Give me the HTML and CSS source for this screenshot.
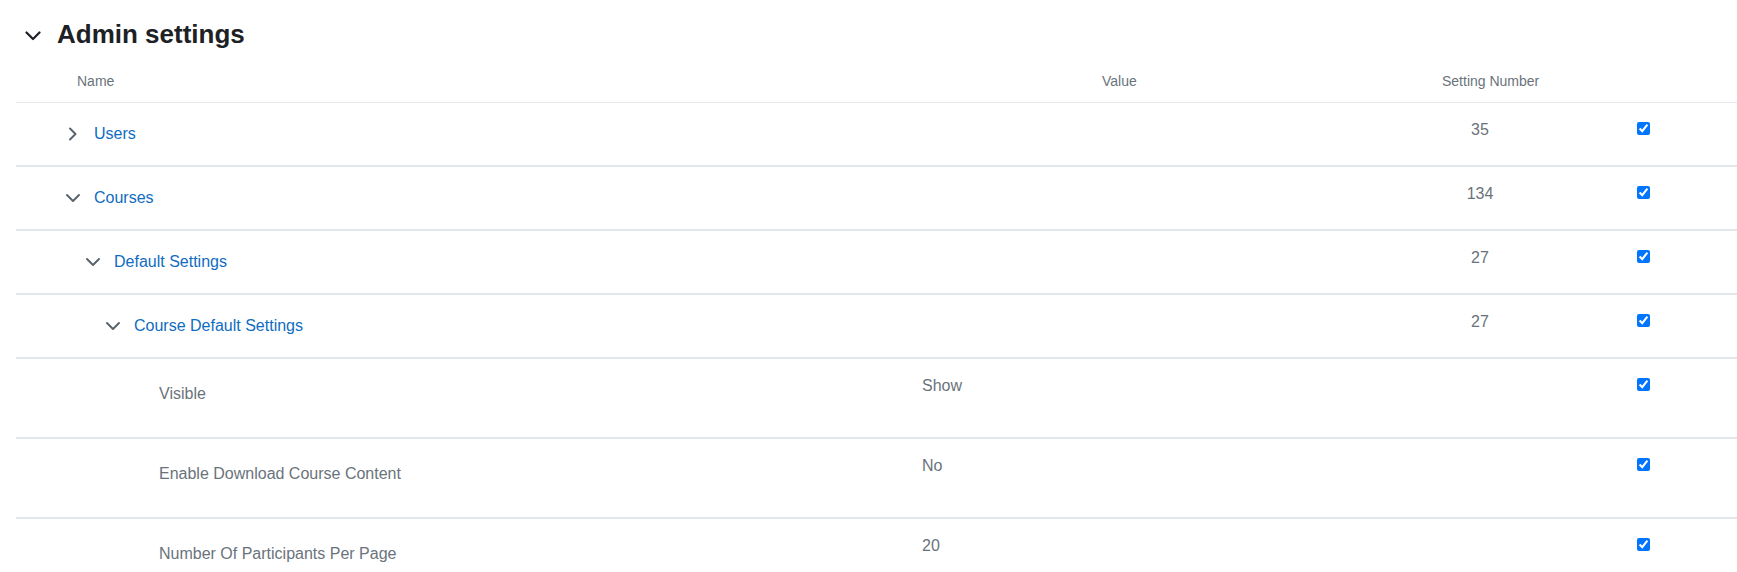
FILE: index.html
```html
<!DOCTYPE html>
<html lang="en">
<head>
<meta charset="utf-8">
<title>Admin settings</title>
<link rel="stylesheet" href="styles.css">
</head>
<body>
<div class="page">
  <h2 class="heading">
    <svg class="heading-chev" width="16" height="10" viewBox="0 0 16 10"><polyline points="1.5,1.5 8,8 14.5,1.5" fill="none" stroke="#1d2125" stroke-width="2.2" stroke-linecap="round" stroke-linejoin="round"/></svg>
    <span>Admin settings</span>
  </h2>
  <div class="table">
    <div class="row head">
      <div class="cell c-name">Name</div>
      <div class="cell c-value">Value</div>
      <div class="cell c-num">Setting Number</div>
      <div class="cell c-check"></div>
    </div>

    <div class="row cat">
      <div class="cell c-name lvl0">
        <svg class="chev" width="14" height="14" viewBox="0 0 14 14"><polyline points="4,1.5 9.5,7 4,12.5" /></svg>
        <a class="link" href="#">Users</a>
      </div>
      <div class="cell c-value"></div>
      <div class="cell c-num">35</div>
      <div class="cell c-check"><input type="checkbox" checked></div>
    </div>

    <div class="row cat">
      <div class="cell c-name lvl0">
        <svg class="chev" width="14" height="14" viewBox="0 0 14 14"><polyline points="1,4 7,10 13,4" /></svg>
        <a class="link" href="#">Courses</a>
      </div>
      <div class="cell c-value"></div>
      <div class="cell c-num">134</div>
      <div class="cell c-check"><input type="checkbox" checked></div>
    </div>

    <div class="row cat">
      <div class="cell c-name lvl1">
        <svg class="chev" width="14" height="14" viewBox="0 0 14 14"><polyline points="1,4 7,10 13,4" /></svg>
        <a class="link" href="#">Default Settings</a>
      </div>
      <div class="cell c-value"></div>
      <div class="cell c-num">27</div>
      <div class="cell c-check"><input type="checkbox" checked></div>
    </div>

    <div class="row cat">
      <div class="cell c-name lvl2">
        <svg class="chev" width="14" height="14" viewBox="0 0 14 14"><polyline points="1,4 7,10 13,4" /></svg>
        <a class="link" href="#">Course Default Settings</a>
      </div>
      <div class="cell c-value"></div>
      <div class="cell c-num">27</div>
      <div class="cell c-check"><input type="checkbox" checked></div>
    </div>

    <div class="row item">
      <div class="cell c-name">Visible</div>
      <div class="cell c-value">Show</div>
      <div class="cell c-num"></div>
      <div class="cell c-check"><input type="checkbox" checked></div>
    </div>

    <div class="row item">
      <div class="cell c-name">Enable Download Course Content</div>
      <div class="cell c-value">No</div>
      <div class="cell c-num"></div>
      <div class="cell c-check"><input type="checkbox" checked></div>
    </div>

    <div class="row item">
      <div class="cell c-name">Number Of Participants Per Page</div>
      <div class="cell c-value">20</div>
      <div class="cell c-num"></div>
      <div class="cell c-check"><input type="checkbox" checked></div>
    </div>
  </div>
</div>
</body>
</html>
```

FILE: styles.css
```css
* { box-sizing: border-box; }

html, body {
  margin: 0;
  padding: 0;
  background: #ffffff;
}

body {
  font-family: "Liberation Sans", Arial, sans-serif;
  color: #6a737b;
  overflow: hidden;
}

.page {
  width: 1737px;
}

.heading {
  margin: 0;
  padding: 19px 0 0 25px;
  height: 50px;
  display: flex;
  align-items: center;
  font-size: 26px;
  line-height: 31px;
  font-weight: 700;
  color: #1d2125;
}

.heading > span {
  display: block;
  line-height: 31px;
}

.heading-chev {
  margin-top: 3px;
  margin-right: 16px;
  flex: none;
}

.table {
  margin-left: 16px;
}

.row {
  display: grid;
  grid-template-columns: 890px 514px 120px 1fr;
  border-bottom: 2px solid #e3e6e9;
}

.cell {
  font-size: 16px;
  line-height: 24px;
}

.row.head {
  height: 53px;
  border-bottom: 1px solid #e6e8eb;
}

.row.head .cell {
  font-size: 14px;
  line-height: 20px;
  padding-top: 21px;
  white-space: nowrap;
}

.row.head .c-name { padding-left: 61px; }
.row.head .c-value { padding-left: 196px; }
.row.head .c-num { padding-left: 22px; text-align: left; }

.row.cat { height: 64px; }
.row.item { height: 80px; }

.c-num {
  text-align: center;
  padding-top: 15px;
}

.c-value {
  padding-top: 15px;
  padding-left: 16px;
}

.c-check {
  padding-top: 19px;
  padding-left: 97px;
}

.c-check input {
  display: block;
  margin: 0;
  width: 13px;
  height: 13px;
}

.row.cat .c-name {
  display: flex;
  align-items: center;
  align-self: start;
  padding-top: 19px;
  gap: 14px;
}

.row.cat .lvl0 { padding-left: 50px; }
.row.cat .lvl1 { padding-left: 70px; }
.row.cat .lvl2 { padding-left: 90px; }

.row.item .c-name {
  padding-top: 23px;
  padding-left: 143px;
}

.chev {
  flex: none;
  fill: none;
  stroke: #58626b;
  stroke-width: 1.9;
  stroke-linecap: round;
  stroke-linejoin: round;
}

.link {
  color: #0f6cbf;
  text-decoration: none;
  line-height: 24px;
}
```
